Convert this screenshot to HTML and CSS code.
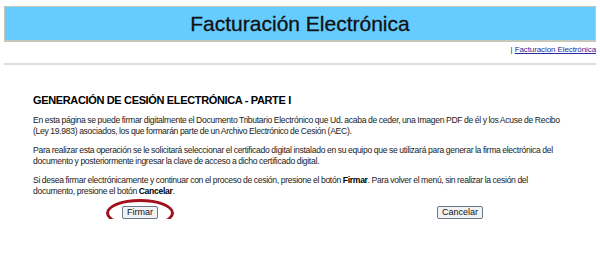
FILE: index.html
```html
<!DOCTYPE html>
<html lang="es">
<head>
<meta charset="utf-8">
<link rel="stylesheet" href="styles.css">
</head>
<body>
<div class="banner">Facturación Electrónica</div>
<div class="crumbs">| <a href="#">Facturacion Electrónica</a></div>
<div class="rule"></div>
<div class="content">
  <h1>GENERACIÓN DE CESIÓN ELECTRÓNICA - PARTE I</h1>
  <p>En esta página se puede firmar digitalmente el Documento Tributario Electrónico que Ud. acaba de ceder, una Imagen PDF de él y los Acuse de Recibo (Ley 19.983) asociados, los que formarán parte de un Archivo Electrónico de Cesión (AEC).</p>
  <p>Para realizar esta operación se le solicitará seleccionar el certificado digital instalado en su equipo que se utilizará para generar la firma electrónica del documento y posteriormente ingresar la clave de acceso a dicho certificado digital.</p>
  <p>Si desea firmar electrónicamente y continuar con el proceso de cesión, presione el botón <b>Firmar</b>. Para volver el menú, sin realizar la cesión del documento, presione el botón <b>Cancelar</b>.</p>
</div>
<div class="actions">
  <div class="mark-wrap">
    <button class="btn">Firmar</button>
    <span class="ring"></span>
  </div>
  <button class="btn">Cancelar</button>
</div>
</body>
</html>
```
FILE: styles.css
```css
html, body { margin: 0; padding: 0; background: #fff; }
body {
  font-family: "Liberation Sans", Arial, sans-serif;
  color: #111;
  padding: 6px 4px 0 4px;
}
.banner {
  height: 33px;
  background: #66ccff;
  border: 1px solid #c4c8bc;
  border-bottom: 2px solid #c4c8bc;
  display: flex;
  align-items: center;
  justify-content: center;
  font-size: 21px;
  color: #111;
  -webkit-text-stroke: 0.3px #111;
}
.crumbs {
  text-align: right;
  font-size: 8px;
  color: #333;
  padding-top: 3px;
  height: 14px;
  letter-spacing: -0.1px;
}
.crumbs a { color: #2a2aa0; text-decoration: underline; }
.rule {
  height: 2px;
  background: #dedede;
  margin-top: 4px;
}
.content {
  padding: 29px 30px 0 29px;
}
h1 {
  margin: 0 0 9px 0;
  font-size: 11px;
  letter-spacing: -0.35px;
  font-weight: bold;
  color: #000;
}
p {
  margin: 0 0 8px 0;
  font-size: 8.6px;
  line-height: 11px;
  letter-spacing: -0.3px;
  word-spacing: -0.3px;
  color: #222;
}
p:last-child { margin-bottom: 9px; }
p b { color: #000; }
.actions {
  display: flex;
  justify-content: flex-start;
  align-items: center;
  gap: 279px;
  padding-top: 0;
  padding-left: 118px;
}
.btn {
  font-family: "Liberation Sans", Arial, sans-serif;
  font-size: 9px;
  color: #111;
  background: #f2f2f2;
  border: 1px solid #6b7b8c;
  border-radius: 2px;
  padding: 1px 4px;
  height: 13px;
  line-height: 9px;
}
.mark-wrap { position: relative; display: flex; }
.ring {
  position: absolute;
  left: -16px;
  top: -7px;
  width: 62px;
  height: 22px;
  border: 3px solid #a3121c;
  border-radius: 50%;
}
```
